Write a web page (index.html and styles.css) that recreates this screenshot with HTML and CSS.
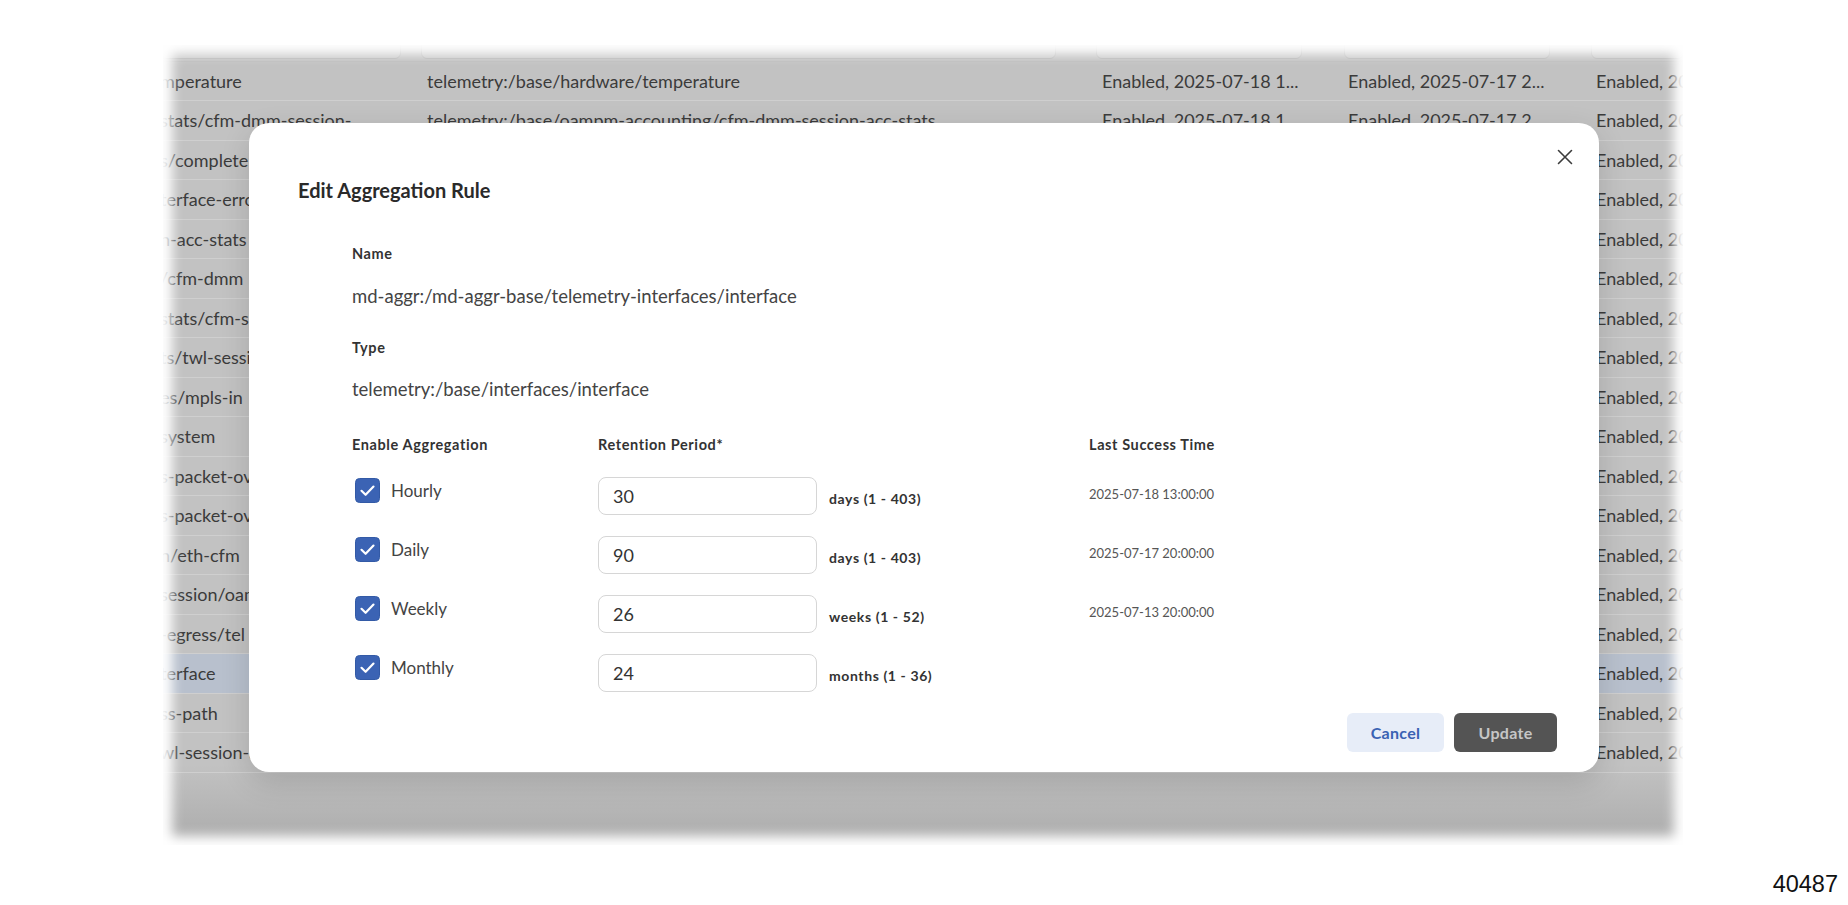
FILE: index.html
```html
<!DOCTYPE html>
<html lang="en">
<head>
<meta charset="utf-8">
<title>Edit Aggregation Rule</title>
<link rel="stylesheet" href="styles.css">
</head>
<body>
<div class="page">
  <div class="backdrop">
    <div class="filters">
      <div class="fcell"><div class="filter first"></div></div>
      <div class="fcell"><div class="filter"></div></div>
      <div class="fcell"><div class="filter"></div></div>
      <div class="fcell"><div class="filter"></div></div>
      <div class="fcell"><div class="filter last"></div></div>
    </div>
    <div class="rows">
      <div class="row"><span class="c1">mperature</span><span>telemetry:/base/hardware/temperature</span><span>Enabled, 2025-07-18 1...</span><span>Enabled, 2025-07-17 2...</span><span>Enabled, 2025-07-18</span></div>
      <div class="row"><span class="c1">stats/cfm-dmm-session-</span><span>telemetry:/base/oampm-accounting/cfm-dmm-session-acc-stats</span><span>Enabled, 2025-07-18 1...</span><span>Enabled, 2025-07-17 2...</span><span>Enabled, 2025-07-18</span></div>
      <div class="row"><span class="c1">s/complete</span><span></span><span></span><span></span><span>Enabled, 2025-07-18</span></div>
      <div class="row"><span class="c1">terface-errors</span><span></span><span></span><span></span><span>Enabled, 2025-07-18</span></div>
      <div class="row"><span class="c1">n-acc-stats</span><span></span><span></span><span></span><span>Enabled, 2025-07-18</span></div>
      <div class="row"><span class="c1">/cfm-dmm</span><span></span><span></span><span></span><span>Enabled, 2025-07-18</span></div>
      <div class="row"><span class="c1">stats/cfm-slm</span><span></span><span></span><span></span><span>Enabled, 2025-07-18</span></div>
      <div class="row"><span class="c1">ts/twl-session</span><span></span><span></span><span></span><span>Enabled, 2025-07-18</span></div>
      <div class="row"><span class="c1">es/mpls-in</span><span></span><span></span><span></span><span>Enabled, 2025-07-18</span></div>
      <div class="row"><span class="c1">system</span><span></span><span></span><span></span><span>Enabled, 2025-07-18</span></div>
      <div class="row"><span class="c1">s-packet-over</span><span></span><span></span><span></span><span>Enabled, 2025-07-18</span></div>
      <div class="row"><span class="c1">s-packet-over</span><span></span><span></span><span></span><span>Enabled, 2025-07-18</span></div>
      <div class="row"><span class="c1">n/eth-cfm</span><span></span><span></span><span></span><span>Enabled, 2025-07-18</span></div>
      <div class="row"><span class="c1">session/oam</span><span></span><span></span><span></span><span>Enabled, 2025-07-18</span></div>
      <div class="row"><span class="c1">-egress/tel</span><span></span><span></span><span></span><span>Enabled, 2025-07-18</span></div>
      <div class="row selected"><span class="c1">terface</span><span></span><span></span><span></span><span>Enabled, 2025-07-18</span></div>
      <div class="row"><span class="c1">ss-path</span><span></span><span></span><span></span><span>Enabled, 2025-07-18</span></div>
      <div class="row"><span class="c1">wl-session-acc</span><span></span><span></span><span></span><span>Enabled, 2025-07-18</span></div>
    </div>
  </div>

  <div class="modal" role="dialog" aria-label="Edit Aggregation Rule">
    <div class="modal-head">
      <h2 class="title">Edit Aggregation Rule</h2>
      <button class="close" aria-label="Close">
        <svg width="24" height="24" viewBox="0 0 24 24"><path d="M5.5 5.5 L18.5 18.5 M18.5 5.5 L5.5 18.5" stroke="#3c3c3c" stroke-width="1.6" fill="none" stroke-linecap="round"/></svg>
      </button>
    </div>
    <div class="modal-body">
      <div class="label first">Name</div>
      <div class="value">md-aggr:/md-aggr-base/telemetry-interfaces/interface</div>
      <div class="label second">Type</div>
      <div class="value type">telemetry:/base/interfaces/interface</div>

      <div class="agg-grid">
        <div class="label">Enable Aggregation</div>
        <div class="label">Retention Period*</div>
        <div class="label">Last Success Time</div>

        <div class="check-cell">
          <svg class="cb" width="25" height="25" viewBox="0 0 25 25"><rect x="0.5" y="0.5" width="24" height="24" rx="4" fill="#3b63b4" stroke="#335aa6"/><path d="M6.5 12.8 L10.6 16.8 L18.5 8.6" stroke="#fff" stroke-width="2.2" fill="none" stroke-linecap="round" stroke-linejoin="round"/></svg>
          <span class="cb-label">Hourly</span>
        </div>
        <div class="ret-cell"><div class="input">30</div><span class="unit">days (1 - 403)</span></div>
        <div class="time-cell">2025-07-18 13:00:00</div>

        <div class="check-cell">
          <svg class="cb" width="25" height="25" viewBox="0 0 25 25"><rect x="0.5" y="0.5" width="24" height="24" rx="4" fill="#3b63b4" stroke="#335aa6"/><path d="M6.5 12.8 L10.6 16.8 L18.5 8.6" stroke="#fff" stroke-width="2.2" fill="none" stroke-linecap="round" stroke-linejoin="round"/></svg>
          <span class="cb-label">Daily</span>
        </div>
        <div class="ret-cell"><div class="input">90</div><span class="unit">days (1 - 403)</span></div>
        <div class="time-cell">2025-07-17 20:00:00</div>

        <div class="check-cell">
          <svg class="cb" width="25" height="25" viewBox="0 0 25 25"><rect x="0.5" y="0.5" width="24" height="24" rx="4" fill="#3b63b4" stroke="#335aa6"/><path d="M6.5 12.8 L10.6 16.8 L18.5 8.6" stroke="#fff" stroke-width="2.2" fill="none" stroke-linecap="round" stroke-linejoin="round"/></svg>
          <span class="cb-label">Weekly</span>
        </div>
        <div class="ret-cell"><div class="input">26</div><span class="unit">weeks (1 - 52)</span></div>
        <div class="time-cell">2025-07-13 20:00:00</div>

        <div class="check-cell">
          <svg class="cb" width="25" height="25" viewBox="0 0 25 25"><rect x="0.5" y="0.5" width="24" height="24" rx="4" fill="#3b63b4" stroke="#335aa6"/><path d="M6.5 12.8 L10.6 16.8 L18.5 8.6" stroke="#fff" stroke-width="2.2" fill="none" stroke-linecap="round" stroke-linejoin="round"/></svg>
          <span class="cb-label">Monthly</span>
        </div>
        <div class="ret-cell"><div class="input">24</div><span class="unit">months (1 - 36)</span></div>
        <div class="time-cell"></div>
      </div>

      <div class="modal-foot">
        <button class="btn cancel">Cancel</button>
        <button class="btn update">Update</button>
      </div>
    </div>
  </div>

  <div class="fig-id">40487</div>
</div>
</body>
</html>
```

FILE: styles.css
```css
* { box-sizing: border-box; }

html, body {
  margin: 0;
  padding: 0;
  background: #ffffff;
}

body {
  width: 1848px;
  height: 905px;
  overflow: hidden;
  font-family: Lato, "Noto Sans", sans-serif;
}

.page {
  position: relative;
  width: 1848px;
  height: 905px;
  padding-top: 45px;
  display: flex;
  flex-direction: column;
}

/* ---------- dimmed background table ---------- */
.backdrop {
  position: relative;
  margin-left: 163px;
  width: 1520px;
  height: 800px;
  overflow: hidden;
  background: linear-gradient(to bottom, #c2c2c2 0, #c2c2c2 720px, #ababab 800px);
}

.backdrop::after {
  content: "";
  position: absolute;
  inset: 0;
  box-shadow: inset 0 0 12px 9px #ffffff;
  pointer-events: none;
}

.filters {
  display: grid;
  grid-template-columns: 258px 675px 246px 248px 1fr;
  height: 16.5px;
  align-items: end;
  border-bottom: 1px solid #bcbcbc;
}

.fcell {
  height: 16.5px;
  display: flex;
  align-items: flex-end;
}

.filter {
  width: 100%;
  height: 30px;
  margin: 0 40px 3px 0;
  border: 1px solid #b4b4b4;
  border-radius: 6px;
  background: #c9c9c9;
}

.filter.first {
  margin-left: -20px;
  margin-right: 6px;
}

.fcell:nth-child(4) .filter { margin-left: 2px; }
.fcell:nth-child(5) .filter { margin-left: 1px; margin-right: -20px; }

.row {
  display: grid;
  grid-template-columns: 258px 675px 246px 248px 1fr;
  height: 39.5px;
  align-items: center;
  border-bottom: 1px solid #cfcfcf;
  font-size: 18px;
  color: #3b3b3b;
  white-space: nowrap;
}

.row span {
  padding-left: 6px;
  overflow: hidden;
}

.row .c1 {
  padding-left: 0;
  text-indent: -3px;
}

.row.selected {
  background: #b8c0cd;
}

/* ---------- modal ---------- */
.modal {
  position: absolute;
  left: 249px;
  top: 123px;
  width: 1350px;
  background: #ffffff;
  border-radius: 20px;
  box-shadow: 0 10px 30px rgba(0, 0, 0, 0.14);
}

.modal-head {
  display: flex;
  justify-content: space-between;
  align-items: flex-start;
  padding: 22px 22px 0 49px;
}

.title {
  margin: 31px 0 0 0;
  font-size: 20px;
  line-height: 28px;
  font-weight: 700;
  color: #2a2a2a;
}

.close {
  width: 24px;
  height: 24px;
  padding: 0;
  border: 0;
  background: transparent;
  display: flex;
}

.modal-body {
  padding: 0 42px 20px 103px;
}

.label {
  font-size: 14.5px;
  line-height: 20px;
  font-weight: 700;
  letter-spacing: 0.6px;
  color: #333333;
}

.label.first { margin-top: 40px; }
.label.second { margin-top: 30px; }

.value {
  margin-top: 20px;
  font-size: 18.5px;
  line-height: 24px;
  color: #444444;
}

.value.type { margin-top: 19px; }

.agg-grid {
  margin-top: 34px;
  display: grid;
  grid-template-columns: 246px 491px 1fr;
  grid-auto-rows: auto;
  row-gap: 21px;
}

.agg-grid > .label:nth-child(-n+3) {
  margin-bottom: 1px;
}

.check-cell {
  display: flex;
  align-items: flex-start;
  gap: 11px;
  height: 38px;
}

.cb {
  margin: 1px 0 0 3px;
  flex: none;
}

.cb-label {
  font-size: 17px;
  line-height: 28px;
  color: #444444;
}

.ret-cell {
  display: flex;
  align-items: center;
  height: 38px;
}

.input {
  width: 219px;
  height: 38px;
  border: 1px solid #d6d6d6;
  border-radius: 8px;
  padding-left: 14px;
  font-size: 18px;
  line-height: 36px;
  color: #333333;
}

.unit {
  margin-left: 12px;
  padding-top: 5px;
  font-size: 14px;
  font-weight: 700;
  color: #333333;
  letter-spacing: 0.6px;
}

.time-cell {
  display: flex;
  align-items: center;
  height: 34px;
  font-size: 13px;
  color: #555555;
}

.modal-foot {
  margin-top: 21px;
  display: flex;
  justify-content: flex-end;
  gap: 10px;
}

.btn {
  height: 39px;
  border: 0;
  border-radius: 6px;
  font-family: Lato, "Noto Sans", sans-serif;
  font-size: 16px;
  font-weight: 700;
  letter-spacing: 0.3px;
  padding: 0;
}

.btn.cancel {
  width: 97px;
  background: #e7edf8;
  color: #3a62b3;
}

.btn.update {
  width: 103px;
  background: #545454;
  color: #c6c6c6;
}

/* ---------- figure id ---------- */
.fig-id {
  margin-top: 25px;
  padding-right: 10px;
  text-align: right;
  font-family: "Liberation Sans", Arial, sans-serif;
  font-size: 23.5px;
  line-height: 28px;
  color: #111111;
}
```
